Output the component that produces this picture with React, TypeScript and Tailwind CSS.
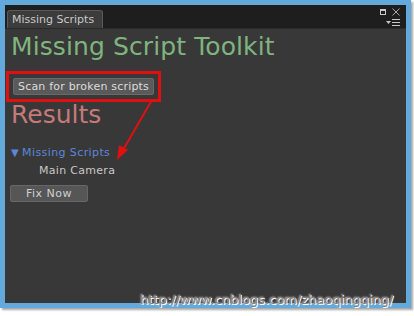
export default function App() {
  return (
    <div className="w-[414px] h-[316px] bg-white relative overflow-hidden" style={{ fontFamily: '"DejaVu Sans", Verdana, sans-serif' }}>
      {/* window frame */}
      <div className="w-[411px] h-[308px] border-[5px] border-[#64a9dc] bg-[#383838] flex flex-col shadow-[2px_2px_2px_rgba(0,0,0,0.35)]">
        {/* tab strip */}
        <div className="h-[24px] bg-[#1e1e1e] flex items-end px-[2px] relative border-b border-[#2a2a2a]">
          <div className="h-[18px] w-[96px] bg-[#3c3c3c] border border-b-0 border-[#5a5a5a] rounded-t-[3px] text-[11px] text-[#c8c8c8] flex items-center px-[4px] leading-none">
            Missing Scripts
          </div>
          <div className="absolute right-[6px] top-[3px] flex flex-col items-end gap-[3px]">
            <div className="flex items-center gap-[6px]">
              <svg width="6" height="6" viewBox="0 0 6 6">
                <rect x="0.5" y="0.5" width="5" height="5" fill="none" stroke="#c8c8c8" />
                <rect x="0.5" y="0.5" width="5" height="1.5" fill="#c8c8c8" />
              </svg>
              <svg width="8" height="8" viewBox="0 0 8 8">
                <path d="M0.5 0.5L7.5 7.5M7.5 0.5L0.5 7.5" stroke="#a8a8a8" strokeWidth="1" />
              </svg>
            </div>
            <div className="flex items-center gap-[1px]">
              <svg width="5" height="3" viewBox="0 0 5 3">
                <path d="M0 0H5L2.5 3Z" fill="#c8c8c8" />
              </svg>
              <svg width="8" height="7" viewBox="0 0 8 7">
                <path d="M0 0.5H8M0 3.5H8M0 6.5H8" stroke="#c8c8c8" strokeWidth="1" />
              </svg>
            </div>
          </div>
        </div>
        {/* content */}
        <div className="flex flex-col items-start pl-[6px] pt-[2px]">
          <div className="text-[25px] leading-[32px] text-[#7fb47f] tracking-[0.1px]">Missing Script Toolkit</div>
          <div className="mt-[8px] ml-[-5px] border-[3px] border-[#e01010] px-[4px] py-[4px]">
            <div className="h-[17px] px-[4px] bg-[#5a5a5a] border border-[#6a6a6a] rounded-[2px] text-[11px] text-[#dcdcdc] flex items-center leading-none tracking-[0.2px]">
              Scan for broken scripts
            </div>
          </div>
          <div className="text-[25px] leading-[28px] text-[#c47a78] mt-[-1px]">Results</div>
          <div className="mt-[16px] text-[11px] leading-[16px] text-[#5b87d9] flex items-center tracking-[0.4px]">
            <span className="text-[10px] mr-[3px]">▼</span>Missing Scripts
          </div>
          <div className="ml-[28px] text-[11px] leading-[16px] text-[#c8c8c8] mt-[2px] tracking-[0.3px]">Main Camera</div>
          <div className="mt-[6px] ml-[-1px] h-[17px] w-[78px] bg-[#565656] border border-[#676767] rounded-[2px] text-[11px] text-[#d0d0d0] flex items-center justify-center leading-none tracking-[0.5px]">
            Fix Now
          </div>
        </div>
      </div>
      {/* red arrow */}
      <svg className="absolute left-0 top-0" width="414" height="316" viewBox="0 0 414 316">
        <line x1="152" y1="100" x2="123" y2="150" stroke="#e01010" strokeWidth="2" />
        <path d="M117 160L119 145L128 150Z" fill="#e01010" />
      </svg>
      {/* watermark */}
      <div className="absolute left-[140px] top-[293px] text-[13px] text-[#808080] leading-none tracking-[0px] [text-shadow:1px_1px_0_#ffffff,0_0_2px_#ffffff]">
        http://www.cnblogs.com/zhaoqingqing/
      </div>
    </div>
  );
}
